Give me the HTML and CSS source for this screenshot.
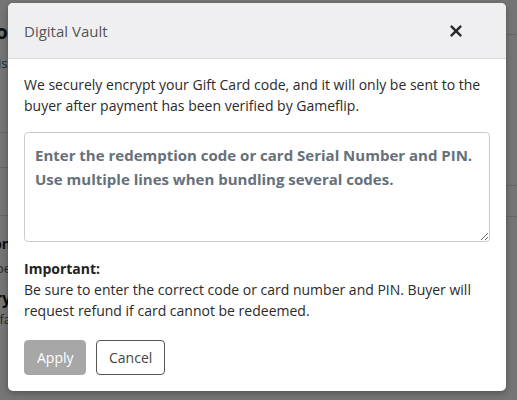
FILE: index.html
```html
<!DOCTYPE html>
<html>
<head>
<meta charset="utf-8">
<link rel="stylesheet" href="styles.css">
</head>
<body>
<div class="page">
  <div class="page-left">
    <div class="clip h1"><span>Gift Card Info</span></div>
    <div class="clip sub"><span>Select what to list</span></div>
    <div class="rule r1"></div>
    <div class="rule r2"></div>
    <div class="rule r3"></div>
    <div class="clip h3 t1"><span>Description</span></div>
    <div class="clip small t2"><span>To be</span></div>
    <div class="clip h2 t3"><span>Delivery</span></div>
    <div class="clip small t4"><span>Safa</span></div>
  </div>
  <div class="page-right">
    <div class="rule q1"></div>
    <div class="rule q2"></div>
    <div class="rule q3"></div>
  </div>
</div>
<div class="overlay"></div>
<div class="modal">
  <div class="modal-header">
    <span class="modal-title">Digital Vault</span>
    <svg class="close" width="12" height="12" viewBox="0 0 12 12"><path d="M1.6 1.6 L10.4 10.4 M10.4 1.6 L1.6 10.4" stroke="#2b2b2b" stroke-width="2.5" stroke-linecap="round"/></svg>
  </div>
  <div class="modal-body">
    <p class="intro">We securely encrypt your Gift Card code, and it will only be sent to the buyer after payment has been verified by Gameflip.</p>
    <textarea class="codes" placeholder="Enter the redemption code or card Serial Number and PIN.&#10;Use multiple lines when bundling several codes."></textarea>
    <p class="note"><strong>Important:</strong><br>Be sure to enter the correct code or card number and PIN. Buyer will request refund if card cannot be redeemed.</p>
    <div class="actions">
      <button class="btn btn-apply">Apply</button>
      <button class="btn btn-cancel">Cancel</button>
    </div>
  </div>
</div>
</body>
</html>
```
FILE: styles.css
```css
html, body { margin: 0; padding: 0; }
body {
  width: 517px;
  height: 400px;
  overflow: hidden;
  background: #fff;
  font-family: "Open Sans", "Liberation Sans", sans-serif;
  position: relative;
}
.page {
  display: flex;
  justify-content: space-between;
  height: 400px;
}
.page-left { width: 10px; position: relative; }
.page-right { width: 12px; position: relative; }
.clip {
  width: 10px;
  overflow: hidden;
  display: flex;
  justify-content: flex-end;
  white-space: nowrap;
  color: #222;
}
.h1 { font-size: 20px; font-weight: 700; height: 30px; line-height: 30px; margin-top: 17px; width: 8px; }
.sub { font-size: 13px; color: #555; height: 20px; line-height: 20px; margin-top: 6px; width: 12px; }
.rule { height: 1px; background: #ddd; }
.r1 { margin-top: 59px; }
.r2 { margin-top: 34px; }
.r3 { margin-top: 47px; }
.h3 { font-size: 14px; font-weight: 700; height: 20px; line-height: 20px; margin-top: 18px; width: 11px; }
.t2 { margin-top: 4px; width: 11px; }
.small { font-size: 13px; color: #555; height: 20px; line-height: 20px; }
.h2 { font-size: 16px; font-weight: 700; height: 22px; line-height: 22px; margin-top: 9px; width: 11px; }
.t4 { margin-top: 0; width: 11px; }
.q1 { margin-top: 34px; }
.q2 { margin-top: 150px; }
.q3 { margin-top: 30px; }

.overlay {
  position: absolute;
  inset: 0;
  background: rgba(0, 0, 0, 0.54);
}
.modal {
  position: absolute;
  left: 8px;
  top: 3px;
  width: 498px;
  background: #fff;
  border-radius: 5px;
  overflow: hidden;
  box-shadow: 0 2px 6px rgba(0,0,0,0.3);
}
.modal-header {
  background: #efeff1;
  border-bottom: 1px solid #d9d9dc;
  height: 55px;
  display: flex;
  align-items: center;
  justify-content: space-between;
  padding: 0 44px 0 16px;
}
.modal-title {
  font-size: 15px;
  color: #555;
  line-height: 24px;
}
.close { display: block; margin-top: 1px; }
.modal-body {
  padding: 15px 16px 16px 16px;
}
.intro, .note {
  margin: 0;
  font-size: 14px;
  line-height: 21px;
  color: #2a2a2a;
}
.note strong { font-weight: 700; color: #222; }
.codes {
  display: block;
  box-sizing: border-box;
  width: 466px;
  height: 110px;
  margin: 16px 0 16px 0;
  padding: 10px 10px;
  border: 1px solid #c8ccd0;
  border-radius: 4px;
  font-family: "Open Sans", "Liberation Sans", sans-serif;
  font-size: 15px;
  line-height: 24px;
  font-weight: 700;
  resize: vertical;
}
.codes::placeholder { color: #65707b; opacity: 1; }
.actions {
  display: flex;
  gap: 10px;
  margin-top: 19px;
}
.btn {
  height: 35px;
  border-radius: 4px;
  font-family: "Open Sans", "Liberation Sans", sans-serif;
  font-size: 14px;
  padding: 0 12px;
  box-sizing: border-box;
}
.btn-apply {
  width: 62px;
  background: #a7a7a7;
  border: 1px solid #a7a7a7;
  color: #fff;
}
.btn-cancel {
  width: 69px;
  background: #fff;
  border: 1px solid #555;
  color: #444;
}
```
